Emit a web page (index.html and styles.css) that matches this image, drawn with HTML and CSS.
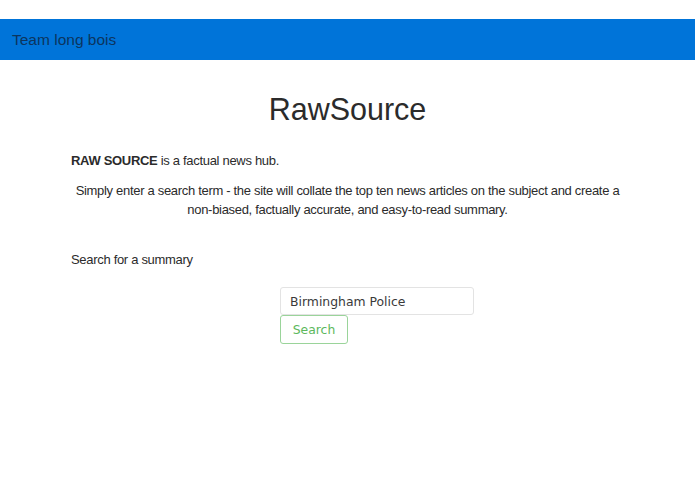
FILE: index.html
```html
<!DOCTYPE html>
<html lang="en">
<head>
<meta charset="utf-8">
<title>RawSource</title>
<link rel="stylesheet" href="styles.css">
</head>
<body>
<div class="topgap"></div>
<nav class="navbar"><span class="brand">Team long bois</span></nav>
<main class="container">
  <h1 class="title">RawSource</h1>
  <p class="intro"><strong>RAW SOURCE</strong> is a factual news hub.</p>
  <p class="desc">Simply enter a search term - the site will collate the top ten news articles on the subject and create a non-biased, factually accurate, and easy-to-read summary.</p>
  <p class="label">Search for a summary</p>
  <form class="search">
    <input class="field" type="text" value="Birmingham Police">
    <button class="btn" type="button">Search</button>
  </form>
</main>
</body>
</html>
```
FILE: styles.css
```css
html, body {
  margin: 0;
  padding: 0;
  background: #fff;
}
body {
  font-family: "Liberation Sans", Arial, sans-serif;
  font-size: 13px;
  letter-spacing: -0.31px;
  color: #2b2b2b;
}
.topgap {
  height: 19px;
}
.navbar {
  height: 41px;
  background: #0074d9;
  display: flex;
  align-items: center;
  padding-left: 12px;
}
.brand {
  font-size: 15.5px;
  letter-spacing: 0;
  color: #0c355e;
}
.container {
  width: 553px;
  margin: 0 auto;
}
.title {
  margin: 31px 0 0 0;
  font-size: 30.5px;
  font-weight: normal;
  letter-spacing: 0;
  text-align: center;
  line-height: 36px;
}
.intro {
  margin: 24px 0 0 0;
  line-height: 19px;
}
.desc {
  margin: 11px 0 0 0;
  text-align: center;
  line-height: 19px;
}
.label {
  margin: 31px 0 0 0;
  line-height: 19px;
}
.search {
  margin: 18px 0 0 209px;
  display: flex;
  flex-direction: column;
  align-items: flex-start;
}
.field {
  box-sizing: border-box;
  width: 194px;
  height: 28px;
  border: 1px solid #e3e3e3;
  border-radius: 3px;
  padding: 0 9px;
  font-family: "DejaVu Sans", sans-serif;
  font-size: 12.4px;
  letter-spacing: 0;
  color: #3a3a3a;
  outline: none;
}
.btn {
  box-sizing: border-box;
  width: 68px;
  height: 29px;
  border: 1px solid #9ad49a;
  border-radius: 3px;
  background: #fff;
  color: #5cb85c;
  font-family: "DejaVu Sans", sans-serif;
  font-size: 12.4px;
  letter-spacing: 0;
  padding: 0;
}
```
